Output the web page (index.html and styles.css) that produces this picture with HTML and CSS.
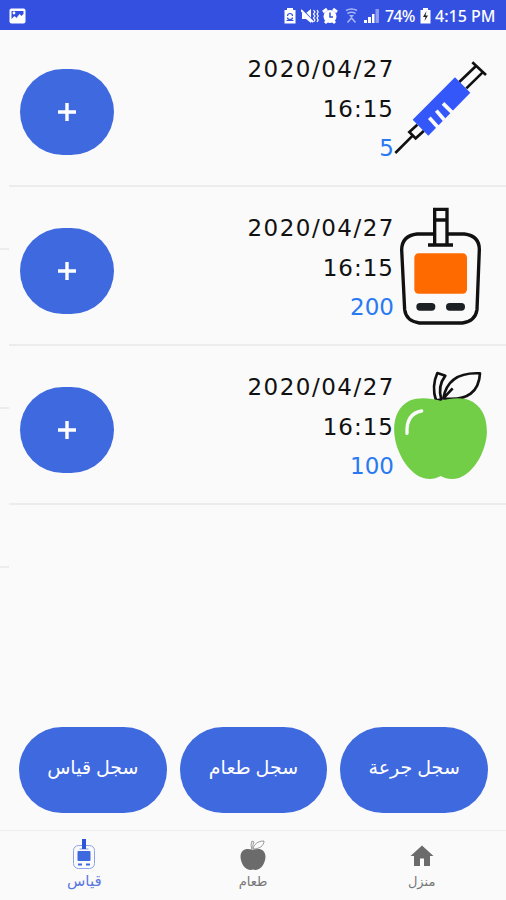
FILE: index.html
```html
<!DOCTYPE html>
<html lang="ar">
<head>
    <meta charset="UTF-8">
    <meta name="viewport" content="width=device-width, initial-scale=1.0">
    <title>قياس</title>
    <link rel="stylesheet" href="styles.css">
</head>
<body>
    <header class="status">
        <svg class="picture" width="17" height="16" viewBox="0 0 17 16">
            <rect x="0.5" y="0.5" width="16" height="15" rx="2" fill="#fff"/>
            <path d="M2.5 3h12v3l-2 2-2-2-3 4-2-2-3 3z" fill="#3450e0"/>
            <circle cx="5" cy="5" r="1.4" fill="#fff"/>
        </svg>
        <svg class="battery-saver" width="12" height="16" viewBox="0 0 12 16">
            <path d="M3 2V0h6v2h2.500v13.500H.5V2z" fill="#fff"/>
            <path d="M3.500 8a2.500 2.500 0 0 1 5 0M8.500 9.500a2.500 2 0 0 1-5 0M2.500 12.500h7" fill="none" stroke="#3450e0" stroke-width="1.200"/>
        </svg>
        <svg class="mute" width="18" height="16" viewBox="0 0 18 16">
            <path d="M1 5h4l5-4v14l-5-4H1z" fill="#fff"/>
            <path d="M1 1l11 12" stroke="#3450e0" stroke-width="1.500"/>
            <path d="M0 2l12 12" stroke="#fff" stroke-width="2"/>
            <path d="M12.500 2l1.500 2-1.500 2 1.500 2-1.500 2 1.500 2-1.500 2M16 2l1.200 2L16 6l1.200 2L16 10l1.200 2-1.200 2" fill="none" stroke="#fff" stroke-width="1.200"/>
        </svg>
        <svg class="alarm" width="16" height="16" viewBox="0 0 16 16">
            <path d="M1 4l4-3M15 4l-4-3M3 15l2-2M13 15l-2-2" stroke="#fff" stroke-width="3"/>
            <circle cx="8" cy="8.500" r="6.500" fill="#fff"/>
            <path d="M8 4.500V9h3" fill="none" stroke="#3450e0" stroke-width="1.500"/>
        </svg>
        <svg class="wifi" width="13" height="16" viewBox="0 0 13 16">
            <path d="M1 2.500q5.500-3 11 0M2.500 5.500q4-2.500 8 0" fill="none" stroke="#a9b7f5" stroke-width="1.500"/>
            <path d="M4 7h5l-2.500 3z" fill="#a9b7f5"/>
            <path d="M2.500 14.500l4-4.500 4 4.500" fill="none" stroke="#a9b7f5" stroke-width="1.500"/>
        </svg>
        <svg class="signal" width="15" height="14" viewBox="0 0 15 14">
            <path d="M0 14v-3h3v3zM4 14V8h3v6zM8 14V5h2.500v9z" fill="#fff"/>
            <path d="M11.500 14V0H15v14z" fill="#8c9df0"/>
        </svg>
        <span class="percent">74%</span>
        <svg class="battery" width="11" height="16" viewBox="0 0 11 16">
            <path d="M3 2V0h5v2h2.500v13.500H.5V2z" fill="#fff"/>
            <path d="M6.500 3L3 9h2.500L4.500 13 8 7.500H5.500z" fill="#222"/>
        </svg>
        <span class="clock">4:15 PM</span>
    </header>

    <main class="content">
        <div class="peek">
            <div class="peek-row"></div>
            <div class="peek-row"></div>
            <div class="peek-row"></div>
        </div>
        <div class="list">
            <div class="row">
                <button class="add"><svg width="20" height="20" viewBox="0 0 20 20"><path d="M10 1v18M1 10h18" stroke="#fff" stroke-width="3.400"/></svg></button>
                <div class="info">
                    <div class="date">2020/04/27</div>
                    <div class="time">16:15</div>
                    <div class="value">5</div>
                </div>
                <svg class="icon" viewBox="492 9 282 390">
                    <path d="M496 339L548 287" stroke="#111" stroke-width="8"/>
                    <path d="M562 254L538 276L557 295L582 272" fill="none" stroke="#111" stroke-width="8"/>
                    <path d="M687 127L738 78M709 145L758 97M727 67L768 105" fill="none" stroke="#111" stroke-width="8"/>
                    <path d="M675 112L721 158L595 287L548 239z" fill="#3457fa"/>
                    <path d="M598 233L623 261M619 212L643 240M639 190L667 218" stroke="#fafafa" stroke-width="11"/>
                </svg>
            </div>
            <div class="row">
                <button class="add"><svg width="20" height="20" viewBox="0 0 20 20"><path d="M10 1v18M1 10h18" stroke="#fff" stroke-width="3.400"/></svg></button>
                <div class="info">
                    <div class="date">2020/04/27</div>
                    <div class="time">16:15</div>
                    <div class="value">200</div>
                </div>
                <svg class="icon" viewBox="492 21 282 390">
                    <path d="M561 117H703Q748 122 748 164L741 344Q736 378 697 384H568Q528 378 524 344L515 164Q516 122 561 117z" fill="#fafafa" stroke="#111" stroke-width="10"/>
                    <path d="M614 150V43H651V150" fill="#fafafa" stroke="#111" stroke-width="10"/>
                    <path d="M614 75H651M594 150H669" stroke="#111" stroke-width="10"/>
                    <rect x="553" y="175" width="158" height="121" rx="13" fill="#ff6a00"/>
                    <rect x="559" y="324" width="57" height="23" rx="11" fill="#1d2024"/>
                    <rect x="648" y="324" width="57" height="23" rx="11" fill="#1d2024"/>
                </svg>
            </div>
            <div class="row">
                <button class="add"><svg width="20" height="20" viewBox="0 0 20 20"><path d="M10 1v18M1 10h18" stroke="#fff" stroke-width="3.400"/></svg></button>
                <div class="info">
                    <div class="date">2020/04/27</div>
                    <div class="time">16:15</div>
                    <div class="value">100</div>
                </div>
                <svg class="icon" viewBox="492 18 282 390">
                    <path d="M618 136Q604 94 622 54L646 62Q622 94 634 134z" fill="#fafafa" stroke="#111" stroke-width="8" stroke-linejoin="round"/>
                    <path d="M640 130C650 72 690 52 750 55C747 108 715 139 640 130zM640 130L668 100" fill="#fafafa" stroke="#111" stroke-width="8" stroke-linejoin="round"/>
                    <path d="M632 137C664 130 700 124 729 141C764 164 773 202 770 243C763 300 729 353 689 368C668 375 650 373 632 363C614 373 594 375 574 367C535 350 499 296 493 236C489 190 505 154 538 137C570 125 602 130 632 137z" fill="#72ce46"/>
                    <path d="M531 235Q528 176 575 168" fill="none" stroke="#fafafa" stroke-width="10" stroke-linecap="round"/>
                </svg>
            </div>
        </div>
    </main>

    <div class="actions">
        <button class="action" dir="rtl">سجل قياس</button>
        <button class="action" dir="rtl">سجل طعام</button>
        <button class="action" dir="rtl">سجل جرعة</button>
    </div>

    <nav class="tabs">
        <a class="tab active">
            <svg width="24" height="32" viewBox="0 0 24 32">
                <rect x="1.500" y="7.500" width="21" height="23" rx="5" fill="none" stroke="#8ea3e8"/>
                <path d="M7.500 11h9" stroke="#8ea3e8"/>
                <rect x="10" y="1" width="4" height="10" fill="#2c55d8"/>
                <rect x="5.500" y="13" width="13" height="10" rx="1" fill="#3f69df"/>
                <path d="M6 26.500h4M14 26.500h4" stroke="#3f69df" stroke-width="2"/>
            </svg>
            <span>قياس</span>
        </a>
        <a class="tab">
            <svg width="28" height="32" viewBox="0 0 28 32">
                <path d="M13 12Q11 7 13 3l2 1q-2 3-1 7C15 6 19 3 25 3c0 5-5 8-11 8" fill="none" stroke="#999"/>
                <path d="M14 12C20 9.500 26.500 11 26.500 19C26 27 20 34 14 31.500C8 34 2 27 1.500 19C1.500 11 8 9.500 14 12z" fill="#6b6b6b"/>
            </svg>
            <span>طعام</span>
        </a>
        <a class="tab">
            <svg width="28" height="32" viewBox="0 0 28 32">
                <path d="M14 7.500L2.500 18H6V28h6v-7.500h4V28h6V18h3.500z" fill="#6b6b6b"/>
            </svg>
            <span>منزل</span>
        </a>
    </nav>
</body>
</html>
```
FILE: styles.css
```css
* {
    box-sizing: border-box;
}
body {
    display: flex;
    flex-direction: column;
    height: 900px;
    margin: 0;
    overflow: hidden;
    background-color: #fafafa;
    font-family: "Noto Sans", "DejaVu Sans", sans-serif;
}
svg {
    display: block;
    flex: none;
}
button {
    border: none;
    padding: 0;
    color: #fff;
    background-color: #3f69df;
}
.status {
    display: flex;
    align-items: center;
    height: 30px;
    padding: 2px 9px 0 9px;
    background-color: #3450e0;
    color: #fff;
    font-size: 16px;
    font-weight: 500;
    white-space: nowrap;
}
.picture {
    margin-right: auto;
}
.mute {
    margin-left: 5px;
}
.alarm {
    margin-left: 3px;
}
.wifi {
    margin-left: 7px;
}
.signal {
    margin-left: 6px;
}
.percent {
    width: 32px;
    margin-left: 6px;
    letter-spacing: -0.8px;
}
.battery {
    margin-left: 3px;
}
.clock {
    width: 62px;
    margin-left: 4px;
}
.content {
    display: flex;
    height: 697px;
}
.peek {
    width: 9px;
    padding-top: 61px;
}
.peek-row {
    height: 159px;
    border-bottom: 2px solid #ececec;
}
.list {
    flex: 1;
}
.row {
    display: flex;
    align-items: flex-end;
    height: 159px;
    padding: 0 18px 12px 11px;
    border-bottom: 2px solid #ececec;
}
.row:first-child {
    height: 157px;
}
.add {
    display: flex;
    align-items: center;
    justify-content: center;
    width: 94px;
    height: 86px;
    margin-bottom: 18px;
    border-radius: 44px;
}
.info {
    flex: 1;
    height: 130px;
    padding-top: 7px;
    color: #111;
    font-family: "DejaVu Sans", sans-serif;
    font-size: 23px;
    line-height: 39.5px;
    text-align: right;
}
.date {
    letter-spacing: 1.5px;
    margin-right: -1px;
}
.time {
    letter-spacing: 1px;
}
.value {
    color: #2979f2;
}
.icon {
    width: 94px;
    height: 130px;
}
.actions {
    display: flex;
    gap: 13px;
    padding: 0 18px 0 19px;
}
.action {
    flex: 1;
    height: 86px;
    padding-bottom: 6px;
    border-radius: 48px;
    font-family: "Noto Sans", "DejaVu Sans", sans-serif;
    font-size: 19px;
}
.tabs {
    display: flex;
    height: 70px;
    margin-top: auto;
    border-top: 1px solid #eee;
}
.tab {
    display: flex;
    flex: 1;
    flex-direction: column;
    align-items: center;
    padding-top: 7px;
    color: #777;
    font-size: 13px;
    line-height: 23px;
}
.active {
    color: #5a78e0;
    font-size: 15px;
    line-height: 21px;
}
```
